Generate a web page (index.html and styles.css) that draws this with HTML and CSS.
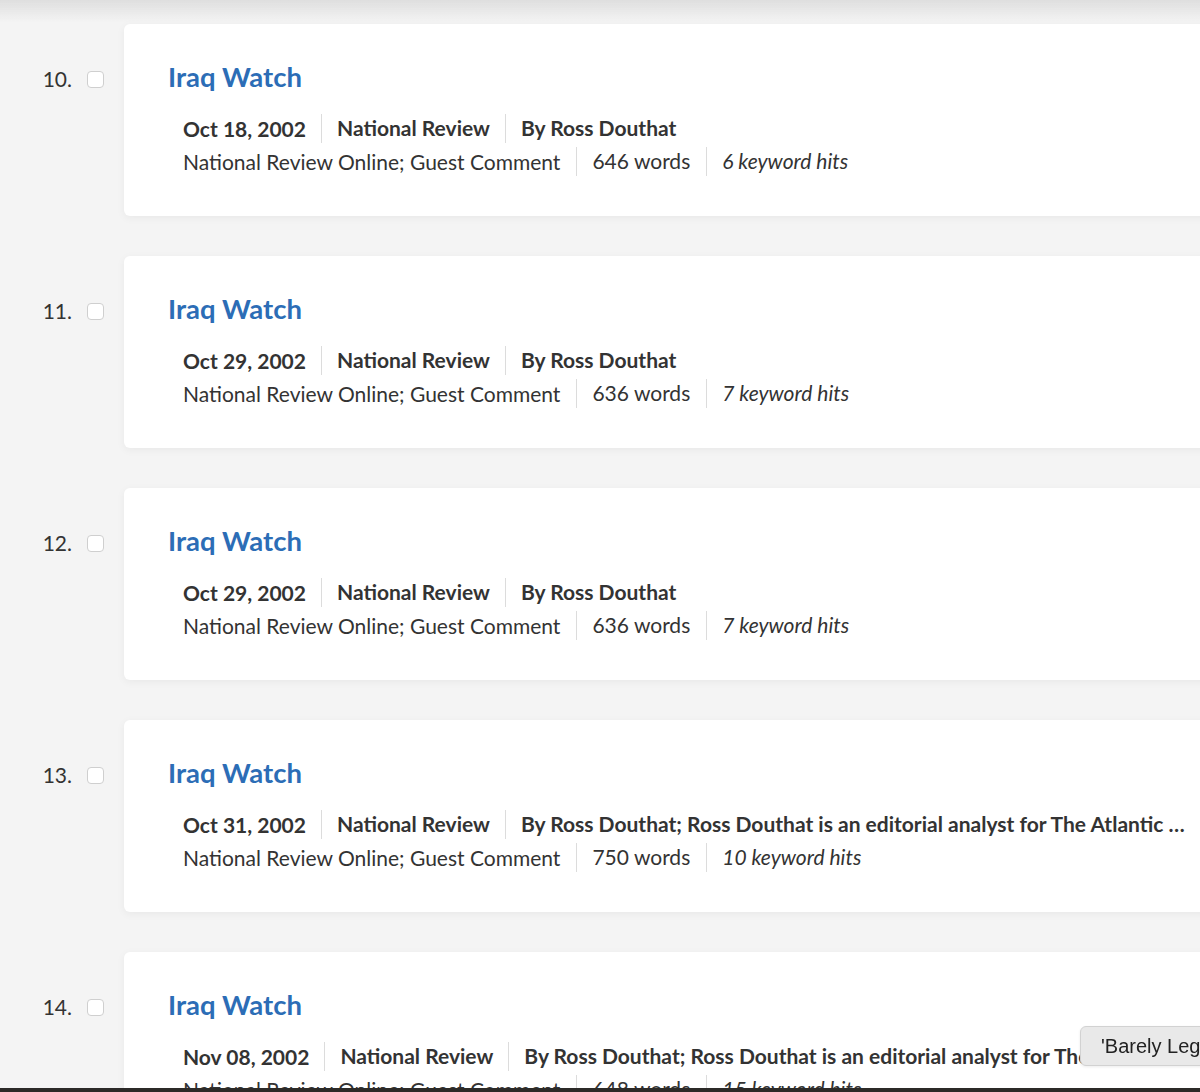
FILE: index.html
```html
<!DOCTYPE html>
<html lang="en">
<head>
    <meta charset="UTF-8">
    <meta name="viewport" content="width=device-width, initial-scale=1.0">
    <title>Search results</title>
    <link rel="stylesheet" href="styles.css">
</head>
<body>

<div class="top-shade"></div>

<ol class="results">
    <li class="result">
        <div class="result-num"><span class="num">10.</span><span class="check"></span></div>
        <div class="card">
            <a class="title" href="#">Iraq Watch</a>
            <div class="meta meta-main">
                <span>Oct 18, 2002</span><span>National Review</span><span>By Ross Douthat</span>
            </div>
            <div class="meta meta-sub">
                <span>National Review Online; Guest Comment</span><span>646 words</span><span class="hits">6 keyword hits</span>
            </div>
        </div>
    </li>
    <li class="result">
        <div class="result-num"><span class="num">11.</span><span class="check"></span></div>
        <div class="card">
            <a class="title" href="#">Iraq Watch</a>
            <div class="meta meta-main">
                <span>Oct 29, 2002</span><span>National Review</span><span>By Ross Douthat</span>
            </div>
            <div class="meta meta-sub">
                <span>National Review Online; Guest Comment</span><span>636 words</span><span class="hits">7 keyword hits</span>
            </div>
        </div>
    </li>
    <li class="result">
        <div class="result-num"><span class="num">12.</span><span class="check"></span></div>
        <div class="card">
            <a class="title" href="#">Iraq Watch</a>
            <div class="meta meta-main">
                <span>Oct 29, 2002</span><span>National Review</span><span>By Ross Douthat</span>
            </div>
            <div class="meta meta-sub">
                <span>National Review Online; Guest Comment</span><span>636 words</span><span class="hits">7 keyword hits</span>
            </div>
        </div>
    </li>
    <li class="result">
        <div class="result-num"><span class="num">13.</span><span class="check"></span></div>
        <div class="card">
            <a class="title" href="#">Iraq Watch</a>
            <div class="meta meta-main">
                <span>Oct 31, 2002</span><span>National Review</span><span>By Ross Douthat; Ross Douthat is an editorial analyst for The Atlantic …</span>
            </div>
            <div class="meta meta-sub">
                <span>National Review Online; Guest Comment</span><span>750 words</span><span class="hits">10 keyword hits</span>
            </div>
        </div>
    </li>
    <li class="result">
        <div class="result-num"><span class="num">14.</span><span class="check"></span></div>
        <div class="card">
            <a class="title" href="#">Iraq Watch</a>
            <div class="meta meta-main">
                <span>Nov 08, 2002</span><span>National Review</span><span>By Ross Douthat; Ross Douthat is an editorial analyst for The Atlantic …</span>
            </div>
            <div class="meta meta-sub">
                <span>National Review Online; Guest Comment</span><span>648 words</span><span class="hits">15 keyword hits</span>
            </div>
        </div>
    </li>
</ol>

<!-- ツールチップ -->
<div class="tooltip">'Barely Legal'</div>
<div class="bottom-bar"></div>

</body>
</html>
```

FILE: styles.css
```css
body {
    margin: 0;
    font-family: Lato, "Open Sans", sans-serif;
    background-color: #f4f4f4;
    color: #333;
    height: 1092px;
    overflow: hidden;
}

.top-shade {
    position: fixed;
    top: 0;
    left: 0;
    right: 0;
    height: 22px;
    background: linear-gradient(#dedede, rgba(244, 244, 244, 0));
    pointer-events: none;
}

.results {
    list-style: none;
    margin: 0;
    padding: 24px 0 0 0;
}

.result {
    display: flex;
    margin-bottom: 40px;
}

.result-num {
    width: 124px;
    flex-shrink: 0;
    display: flex;
    align-items: center;
    height: 32px;
    padding-top: 38px;
}

.num {
    width: 72px;
    text-align: right;
    font-size: 21px;
    color: #333;
}

.check {
    width: 15px;
    height: 15px;
    margin-left: 15px;
    margin-top: 3px;
    border: 1px solid #cfcfcf;
    border-radius: 4px;
    background-color: #fff;
}

.card {
    flex: 1;
    margin-right: -40px;
    background-color: #fff;
    border-radius: 6px;
    box-shadow: 0 2px 8px rgba(0, 0, 0, 0.05);
    padding: 37px 0 37px 44px;
    height: 118px;
    overflow: hidden;
}

.title {
    display: block;
    font-size: 27.5px;
    font-weight: bold;
    line-height: 32px;
    color: #2c6db6;
    text-decoration: none;
}

.meta {
    display: flex;
    padding-left: 15px;
    font-size: 21px;
    line-height: 33px;
    white-space: nowrap;
}

.meta-main {
    margin-top: 19px;
    font-weight: bold;
}

.meta span {
    padding: 0 16px 0 15px;
    border-left: 1px solid #dcdcdc;
}

.meta-main span {
    padding-right: 15px;
}

.meta span:first-child {
    padding-left: 0;
    border-left: none;
}

.meta span + span {
    line-height: 28px;
    margin: 2px 0;
}

.hits {
    font-style: italic;
}

.tooltip {
    position: fixed;
    left: 1080px;
    top: 1026px;
    width: 140px;
    height: 38px;
    padding-left: 20px;
    background-color: #e9e9e9;
    border: 1px solid #d2d2d2;
    border-radius: 6px;
    font-family: "Liberation Sans", Arial, sans-serif;
    font-size: 20px;
    line-height: 38px;
    color: #222;
    white-space: nowrap;
    overflow: hidden;
    box-shadow: 0 1px 3px rgba(0, 0, 0, 0.08);
}

.bottom-bar {
    position: fixed;
    left: 0;
    right: 0;
    bottom: 0;
    height: 4px;
    background-color: #2c2a28;
}
```
